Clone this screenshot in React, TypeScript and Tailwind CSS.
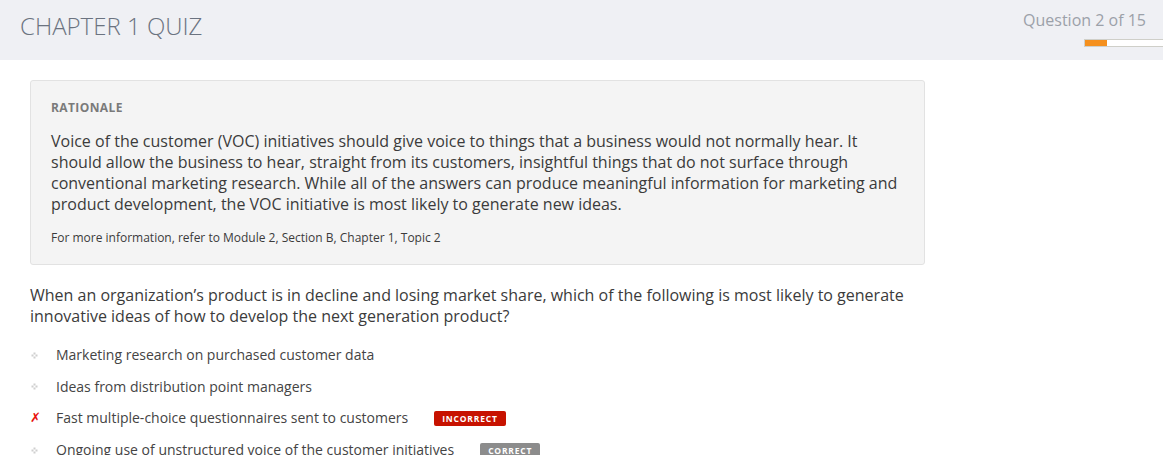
const options = [
  { text: 'Marketing research on purchased customer data', status: null },
  { text: 'Ideas from distribution point managers', status: null },
  { text: 'Fast multiple-choice questionnaires sent to customers', status: 'incorrect' },
  { text: 'Ongoing use of unstructured voice of the customer initiatives', status: 'correct' },
];

function Bullet() {
  return (
    <svg width="7" height="7" viewBox="0 0 7 7" className="block">
      <rect x="2.5" y="0.5" width="2" height="2" fill="#cfcfcf" />
      <rect x="0.5" y="2.5" width="2" height="2" fill="#cfcfcf" />
      <rect x="4.5" y="2.5" width="2" height="2" fill="#cfcfcf" />
      <rect x="2.5" y="4.5" width="2" height="2" fill="#cfcfcf" />
    </svg>
  );
}

export default function App() {
  return (
    <div className="min-h-screen bg-white font-['Open_Sans',sans-serif]">
      <header className="h-[60px] bg-[#eff0f4] flex justify-between">
        <h1 className="pl-5 pt-[10px] text-[24px] leading-[32px] font-light text-[#6b7380]">
          CHAPTER 1 QUIZ
        </h1>
        <div className="flex flex-col items-end pt-[9px]">
          <div className="pr-[17px] text-[16px] leading-[22px] text-[#9ca1a9]">Question 2 of 15</div>
          <div className="mt-[8px] w-[79px] h-[8px] bg-white border border-[#cfcfc9] border-r-0 flex">
            <div className="w-[22px] h-full bg-[#f5901e]" />
          </div>
        </div>
      </header>

      <main className="pl-[30px] pt-5 w-[925px]">
        <section className="bg-[#f4f4f4] border border-[#e2e2e2] rounded-[3px] px-5 pt-[19px] pb-[18px]">
          <h2 className="text-[12px] leading-[16px] font-bold tracking-[0.4px] text-[#7a7a7a]">RATIONALE</h2>
          <p className="mt-[15px] text-[16px] leading-[21px] text-[#3b3b3b]">
            Voice of the customer (VOC) initiatives should give voice to things that a business would not normally hear. It
            should allow the business to hear, straight from its customers, insightful things that do not surface through
            conventional marketing research. While all of the answers can produce meaningful information for marketing and
            product development, the VOC initiative is most likely to generate new ideas.
          </p>
          <p className="mt-[15px] text-[12px] leading-[16px] text-[#3b3b3b]">
            For more information, refer to Module 2, Section B, Chapter 1, Topic 2
          </p>
        </section>

        <p className="mt-[20px] text-[16px] leading-[21px] text-[#3b3b3b] pr-4">
          When an organization’s product is in decline and losing market share, which of the following is most likely to generate
          innovative ideas of how to develop the next generation product?
        </p>

        <ul className="mt-[18px] flex flex-col gap-[11.7px]">
          {options.map((o) => (
            <li key={o.text} className="flex items-center h-[20px]">
              <span className="w-[26px] flex items-center">
                {o.status === 'incorrect' ? (
                  <span className="text-[13px] leading-[20px] font-bold italic text-[#e8120c] font-['DejaVu_Sans',sans-serif]">✗</span>
                ) : (
                  <span className="pl-[1px]">
                    <Bullet />
                  </span>
                )}
              </span>
              <span className="text-[14px] leading-[20px] text-[#444]">{o.text}</span>
              {o.status === 'incorrect' && (
                <span className="ml-[26px] h-[15px] px-[8px] rounded-[2px] bg-[#c71200] text-white text-[8.5px] font-bold tracking-[0.8px] leading-[15px]">
                  INCORRECT
                </span>
              )}
              {o.status === 'correct' && (
                <span className="ml-[26px] h-[15px] px-[8px] rounded-[2px] bg-[#8c8c8c] text-white text-[8.5px] font-bold tracking-[0.8px] leading-[15px]">
                  CORRECT
                </span>
              )}
            </li>
          ))}
        </ul>
      </main>
    </div>
  );
}
